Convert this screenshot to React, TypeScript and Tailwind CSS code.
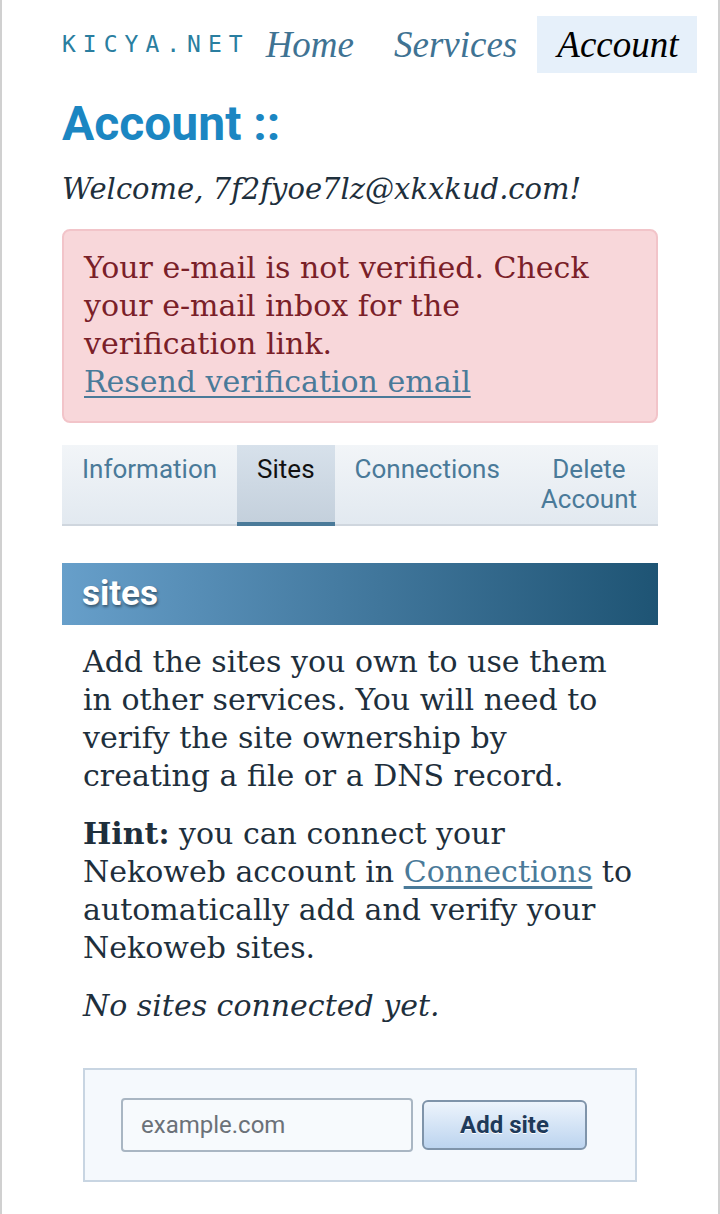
export default function App() {
  const serif = "font-['DejaVu_Serif','Liberation_Serif',serif]";
  const sans = "font-['Roboto','Liberation_Sans',sans-serif]";

  const tabs = [
    { label: 'Information', active: false },
    { label: 'Sites', active: true },
    { label: 'Connections', active: false },
    { label: 'Delete Account', active: false },
  ];

  return (
    <div className="min-h-[1214px] border-x-2 border-[#d0d0d0] bg-white">
      <div className="px-[60px]">
        <header className="flex items-end pt-4">
          <span className="mb-[12px] font-['DejaVu_Sans_Mono',monospace] text-[23px] tracking-[7px] text-[#2a7ea0]">
            KICYA.NET
          </span>
          <nav className="-mr-[38px] flex items-center font-['Liberation_Serif',serif] text-[37px] leading-[45px] italic">
            <a className="py-[6px] pr-[20px] pl-[16px] text-[#3f7393]">Home</a>
            <a className="px-[20px] py-[6px] text-[#3f7393]">Services</a>
            <a className="bg-[#e6f0fa] pt-[6px] pr-[18px] pb-[6px] pl-[20px] text-black">Account</a>
          </nav>
        </header>

        <h1 className={`${sans} mt-[23px] text-[48px] leading-[56px] font-bold text-[#1b86c2]`}>
          Account ::
        </h1>

        <p className={`${serif} mt-[17px] text-[29px] leading-[40px] italic text-[#1e2f3c]`}>
          Welcome, 7f2fyoe7lz@xkxkud.com!
        </p>

        <div
          className={`${serif} mt-[20px] rounded-[8px] border-2 border-[#f2c4c9] bg-[#f8d7da] pt-[18px] pr-[26px] pb-[20px] pl-[20px] text-[30px] leading-[38px] text-[#7a2028]`}
        >
          Your e-mail is not verified. Check your e-mail inbox for the verification link.
          <br />
          <a className="text-[#4a7a99] underline decoration-2 underline-offset-[4px]">
            Resend verification email
          </a>
        </div>

        <div className="mt-[22px] flex border-b-2 border-[#cfd6de] bg-gradient-to-b from-[#f2f5f8] to-[#e2e9f0]">
          {tabs.map((t) => (
            <div
              key={t.label}
              className={`${sans} px-[20px] pt-[9px] pb-[10px] text-center text-[26px] leading-[30px] ${
                t.active
                  ? '-mb-[2px] border-b-4 border-[#4a7a99] bg-gradient-to-b from-[#d7e1eb] to-[#c4d0dc] text-[#111]'
                  : 'text-[#4a7a99]'
              } ${t.label === 'Delete Account' ? 'flex-1' : ''}`}
            >
              {t.label}
            </div>
          ))}
        </div>

        <div className="mt-[37px] flex h-[62px] items-center bg-gradient-to-r from-[#679fca] to-[#1e5474] px-[20px]">
          <h2 className={`${sans} text-[35px] font-bold text-white [text-shadow:1px_2px_3px_rgba(0,0,0,0.45)]`}>
            sites
          </h2>
        </div>

        <div className={`${serif} pt-[18px] pr-[26px] pl-[21px] text-[30px] leading-[38px] text-[#1e2f3c]`}>
          <p>
            Add the sites you own to use them in other services. You will need to verify the site
            ownership by creating a file or a DNS record.
          </p>
          <p className="mt-[20px]">
            <b>Hint:</b> you can connect your Nekoweb account in{' '}
            <a className="text-[#4a7a99] underline underline-offset-[4px]">Connections</a> to
            automatically add and verify your Nekoweb sites.
          </p>
          <p className="mt-[20px] italic">No sites connected yet.</p>
        </div>

        <div className="mx-[21px] mt-[43px] flex items-center gap-[9px] border-2 border-[#c8d5e2] bg-[#f5f9fd] px-[36px] py-[28px]">
          <input
            placeholder="example.com"
            className={`${sans} h-[54px] w-[292px] rounded-[4px] border-2 border-[#a9b6c3] bg-[#f7fafd] px-[18px] text-[24px] text-[#333] placeholder:text-[#6b7178] outline-none`}
          />
          <button
            className={`${sans} h-[50px] w-[165px] rounded-[6px] border-2 border-[#7f94aa] bg-gradient-to-b from-[#edf4fc] to-[#bcd4ef] text-[24px] font-bold text-[#1e3a5a] [text-shadow:0_1px_0_white]`}
          >
            Add site
          </button>
        </div>
      </div>
    </div>
  );
}
